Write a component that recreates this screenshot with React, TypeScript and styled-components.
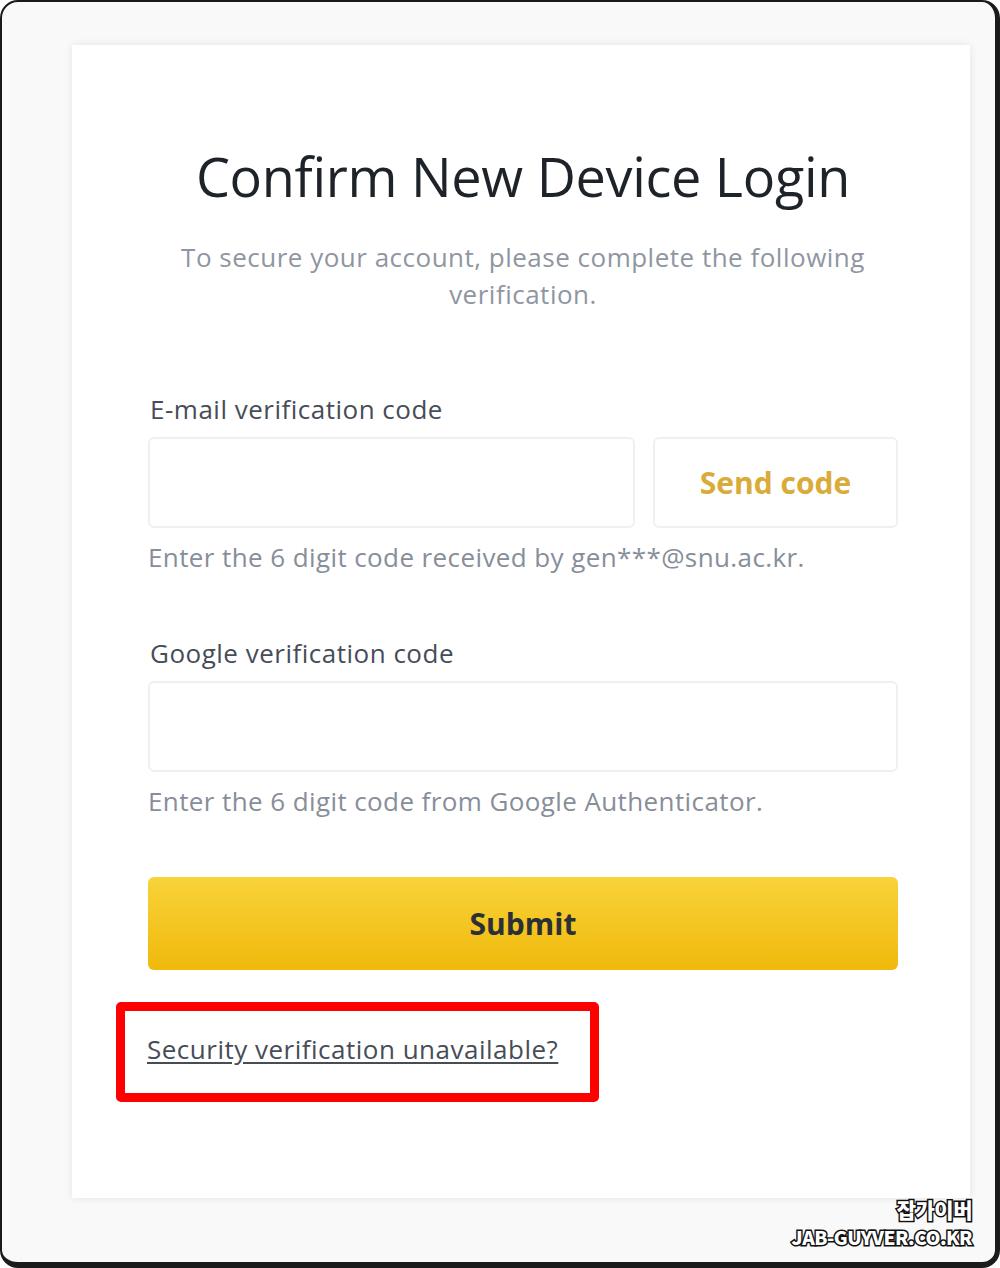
import styled, { createGlobalStyle } from 'styled-components';

const FONT = `'Open Sans', 'Liberation Sans', Arial, sans-serif`;

const GlobalStyle = createGlobalStyle`
  * {
    box-sizing: border-box;
  }
  body {
    margin: 0;
    background: #ffffff;
    font-family: ${FONT};
  }
`;

interface IFieldProps {
  label: string;
  hint: string;
  withButton?: boolean;
}

const Field = ({ label, hint, withButton }: IFieldProps) => {
  return (
    <FieldWrapper>
      <Label>{label}</Label>
      <InputRow>
        <Input type={'text'} />
        {withButton && <SendButton type={'button'}>Send code</SendButton>}
      </InputRow>
      <Hint>{hint}</Hint>
    </FieldWrapper>
  );
};

export default function App() {
  return (
    <>
      <GlobalStyle />
      <Frame>
        <Card>
          <Title>Confirm New Device Login</Title>
          <Subtitle>
            To secure your account, please complete the following
            <br />
            verification.
          </Subtitle>
          <Form>
            <Field
              label={'E-mail verification code'}
              hint={'Enter the 6 digit code received by gen***@snu.ac.kr.'}
              withButton
            />
            <Field
              label={'Google verification code'}
              hint={'Enter the 6 digit code from Google Authenticator.'}
            />
          </Form>
          <SubmitButton type={'button'}>Submit</SubmitButton>
          <Highlight>
            <HelpLink href={'#'}>Security verification unavailable?</HelpLink>
          </Highlight>
        </Card>
        <Watermark>
          <WatermarkLine $size={21}>잡가이버</WatermarkLine>
          <WatermarkLine $size={19}>JAB-GUYVER.CO.KR</WatermarkLine>
        </Watermark>
      </Frame>
    </>
  );
}

const Frame = styled.div`
  position: relative;
  width: 1000px;
  height: 1268px;
  padding: 43px 0 0 70px;
  background: #f9f9f9;
  border-style: solid;
  border-color: #1b1b1b;
  border-width: 2px 5px 6px 2px;
  border-radius: 18px;
`;

const Card = styled.div`
  width: 898px;
  height: 1153px;
  background: #ffffff;
  box-shadow: 0 0 8px rgba(0, 0, 0, 0.09);
  padding: 98px 72px 0 76px;
  display: flex;
  flex-direction: column;
`;

const Title = styled.h1`
  margin: 0;
  font-size: 54px;
  line-height: 66px;
  font-weight: 400;
  color: #1e2329;
  text-align: center;
  letter-spacing: -0.3px;
`;

const Subtitle = styled.p`
  margin: 30px 0 0;
  font-size: 26px;
  line-height: 37px;
  color: #8f96a1;
  text-align: center;
  letter-spacing: 0.5px;
`;

const Form = styled.div`
  margin-top: 81px;
  display: flex;
  flex-direction: column;
  gap: 66px;
`;

const FieldWrapper = styled.div`
  display: flex;
  flex-direction: column;
`;

const Label = styled.label`
  font-size: 26px;
  line-height: 30px;
  color: #474d57;
  padding-left: 2px;
  letter-spacing: 0.5px;
`;

const InputRow = styled.div`
  display: flex;
  gap: 18px;
  margin-top: 13px;
`;

const Input = styled.input`
  flex: 1;
  height: 91px;
  border: 2px solid #eef0f2;
  border-radius: 6px;
  background: #ffffff;
  outline: none;
  font-family: ${FONT};
  font-size: 25px;
  padding: 0 16px;
`;

const SendButton = styled.button`
  width: 245px;
  height: 91px;
  border: 2px solid #eef0f2;
  border-radius: 6px;
  background: #ffffff;
  font-family: ${FONT};
  font-size: 30px;
  font-weight: 700;
  color: #d9ac3a;
  cursor: pointer;
`;

const Hint = styled.div`
  margin-top: 14px;
  font-size: 26px;
  line-height: 30px;
  color: #878e99;
  letter-spacing: 0.4px;
`;

const SubmitButton = styled.button`
  margin-top: 61px;
  height: 93px;
  width: 100%;
  border: none;
  border-radius: 6px;
  background: linear-gradient(180deg, #f8d33a 0%, #f0b90b 100%);
  font-family: ${FONT};
  font-size: 30px;
  font-weight: 700;
  color: #2b2f36;
  cursor: pointer;
`;

const Highlight = styled.div`
  align-self: flex-start;
  margin: 32px 0 0 -32px;
  width: 483px;
  height: 100px;
  border: 9px solid #ff0000;
  border-radius: 5px;
  padding: 0 0 6px 22px;
  display: flex;
  align-items: center;
`;

const HelpLink = styled.a`
  font-size: 26px;
  line-height: 30px;
  color: #474d57;
  text-decoration: underline;
  text-underline-offset: 3px;
  letter-spacing: 0.5px;
`;

const Watermark = styled.div`
  position: absolute;
  right: 23px;
  bottom: 16px;
  display: flex;
  flex-direction: column;
  align-items: flex-end;
  gap: 7px;
`;

const WatermarkLine = styled.div<{ $size: number }>`
  font-family: 'Noto Sans CJK KR', 'Liberation Sans', sans-serif;
  font-size: ${props => props.$size}px;
  line-height: ${props => props.$size}px;
  font-weight: 900;
  color: #ffffff;
  letter-spacing: -0.5px;
  -webkit-text-stroke: 3px #111111;
  paint-order: stroke fill;
`;
